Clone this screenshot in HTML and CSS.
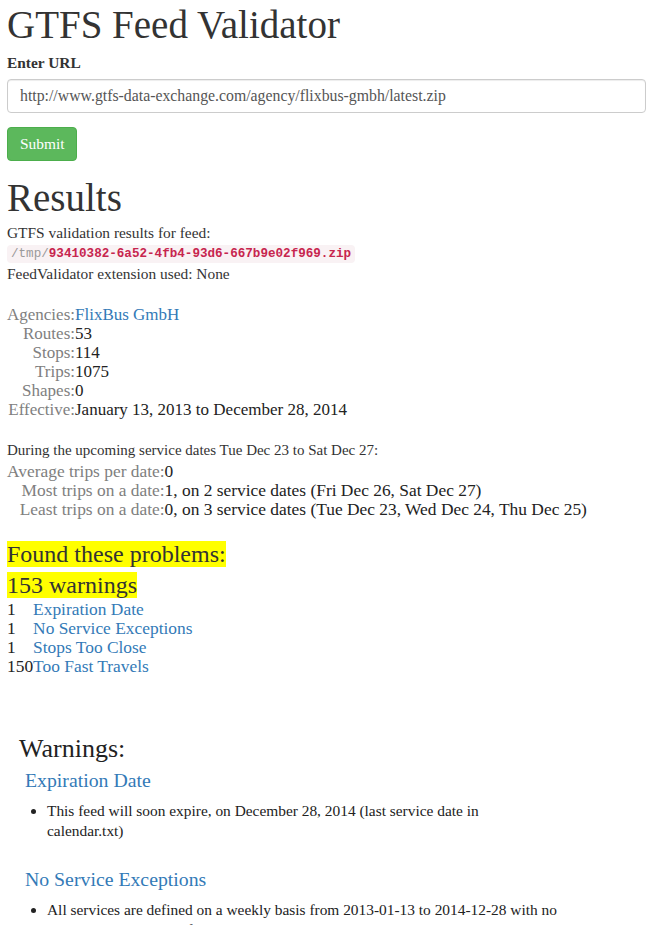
FILE: index.html
```html
<!DOCTYPE html>
<html lang="en">
<head>
<meta charset="utf-8">
<title>GTFS Feed Validator</title>
<link rel="stylesheet" href="styles.css">
</head>
<body>
<div class="page">
  <h1 class="title">GTFS Feed Validator</h1>
  <form class="url-form">
    <label class="field-label" for="url">Enter URL</label>
    <input class="field-input" id="url" type="text" value="http://www.gtfs-data-exchange.com/agency/flixbus-gmbh/latest.zip">
    <button class="btn-submit" type="button">Submit</button>
  </form>

  <h1 class="results-title">Results</h1>
  <p class="intro">GTFS validation results for feed:<br><code class="feed-code"><span class="code-muted">/tmp/</span>93410382-6a52-4fb4-93d6-667b9e02f969.zip</code><br>FeedValidator extension used: None</p>

  <table class="stats stats-feed">
    <tr><th>Agencies:</th><td><a class="link" href="#">FlixBus GmbH</a></td></tr>
    <tr><th>Routes:</th><td>53</td></tr>
    <tr><th>Stops:</th><td>114</td></tr>
    <tr><th>Trips:</th><td>1075</td></tr>
    <tr><th>Shapes:</th><td>0</td></tr>
    <tr><th>Effective:</th><td>January 13, 2013 to December 28, 2014</td></tr>
  </table>

  <p class="upcoming">During the upcoming service dates Tue Dec 23 to Sat Dec 27:</p>
  <table class="stats stats-dates">
    <tr><th>Average trips per date:</th><td>0</td></tr>
    <tr><th>Most trips on a date:</th><td>1, on 2 service dates (Fri Dec 26, Sat Dec 27)</td></tr>
    <tr><th>Least trips on a date:</th><td>0, on 3 service dates (Tue Dec 23, Wed Dec 24, Thu Dec 25)</td></tr>
  </table>

  <div class="problems problems-first"><span class="highlight">Found these problems:</span></div>
  <div class="problems problems-second"><span class="highlight">153 warnings</span></div>

  <table class="summary">
    <tr><td class="count">1</td><td><a class="link" href="#">Expiration Date</a></td></tr>
    <tr><td class="count">1</td><td><a class="link" href="#">No Service Exceptions</a></td></tr>
    <tr><td class="count">1</td><td><a class="link" href="#">Stops Too Close</a></td></tr>
    <tr><td class="count">150</td><td><a class="link" href="#">Too Fast Travels</a></td></tr>
  </table>

  <section class="warnings">
    <h2 class="warnings-title">Warnings:</h2>
    <div class="warning">
      <h3 class="warning-name"><a class="link" href="#">Expiration Date</a></h3>
      <ul class="warning-list">
        <li>This feed will soon expire, on December 28, 2014 (last service date in calendar.txt)</li>
      </ul>
    </div>
    <div class="warning">
      <h3 class="warning-name"><a class="link" href="#">No Service Exceptions</a></h3>
      <ul class="warning-list">
        <li>All services are defined on a weekly basis from 2013-01-13 to 2014-12-28 with no single day variations. If there are exceptions such as holiday service dates please ensure they are listed in calendar_dates.txt.</li>
      </ul>
    </div>
  </section>
</div>
</body>
</html>
```
FILE: styles.css
```css
html, body {
  margin: 0;
  padding: 0;
  background: #fff;
}
body {
  font-family: "Liberation Serif", "Times New Roman", serif;
  font-size: 15.4px;
  line-height: 19px;
  color: #333;
  overflow: hidden;
}
.page {
  padding: 0 0 0 7px;
}
.title {
  margin: 3px 0 6px;
  font-size: 39px;
  line-height: 44px;
  font-weight: normal;
  color: #333;
}
.url-form {
  display: flex;
  flex-direction: column;
  align-items: flex-start;
}
.field-label {
  font-weight: bold;
  line-height: 20px;
  margin-bottom: 6px;
}
.field-input {
  box-sizing: border-box;
  width: 100%;
  height: 34px;
  margin: 0;
  padding: 6px 12px;
  border: 1px solid #ccc;
  border-radius: 4px;
  box-shadow: inset 0 1px 1px rgba(0,0,0,.075);
  font-family: inherit;
  font-size: 15.8px;
  color: #555;
  background: #fff;
  outline: none;
}
.btn-submit {
  box-sizing: border-box;
  height: 34px;
  margin-top: 14px;
  padding: 6px 12px;
  border: 1px solid #4cae4c;
  border-radius: 4px;
  background: #5cb85c;
  color: #fff;
  font-family: inherit;
  font-size: 15.4px;
  line-height: 20px;
}
.results-title {
  margin: 15px 0 0;
  font-size: 39px;
  line-height: 44px;
  font-weight: normal;
}
.intro {
  margin: 3px 0 0;
}
.feed-code {
  font-family: "Liberation Mono", "Courier New", monospace;
  font-size: 12.6px;
  font-weight: bold;
  color: #c7254e;
  background: #f9f2f4;
  border-radius: 4px;
  padding: 2px 4px;
}
.code-muted {
  color: #999;
  font-weight: normal;
}
.stats {
  border-collapse: collapse;
  font-size: 17.4px;
}
.stats th,
.stats td,
.summary td {
  padding: 0;
  height: 19px;
  line-height: 19px;
  white-space: nowrap;
  vertical-align: middle;
}
.stats th {
  text-align: right;
  font-weight: normal;
  color: #808080;
}
.stats td {
  color: #222;
}
.stats-feed {
  margin-top: 22px;
  font-size: 17px;
}
.upcoming {
  margin: 22px 0 0;
  font-size: 15px;
}
.stats-dates {
  margin-top: 2px;
}
.link {
  color: #337ab7;
  text-decoration: none;
}
.problems {
  font-size: 24px;
  line-height: 31px;
}
.problems-first {
  margin-top: 20px;
}
.highlight {
  background: #ffff00;
}
.summary {
  border-collapse: collapse;
  font-size: 17.4px;
  margin-top: -1px;
}
.summary td.count {
  color: #222;
}
.warnings {
  margin: 58px 0 0 12px;
}
.warnings-title {
  margin: 0;
  font-size: 26px;
  line-height: 29px;
  font-weight: normal;
  color: #222;
}
.warning-name {
  margin: 6px 0 0 6px;
  font-size: 19.8px;
  line-height: 22px;
  font-weight: normal;
}
.warning-list {
  margin: 10px 0 0 6px;
  padding-left: 22px;
  width: 511px;
  font-size: 15.4px;
  line-height: 20px;
  color: #222;
}
.warning + .warning {
  margin-top: 27px;
}
```
